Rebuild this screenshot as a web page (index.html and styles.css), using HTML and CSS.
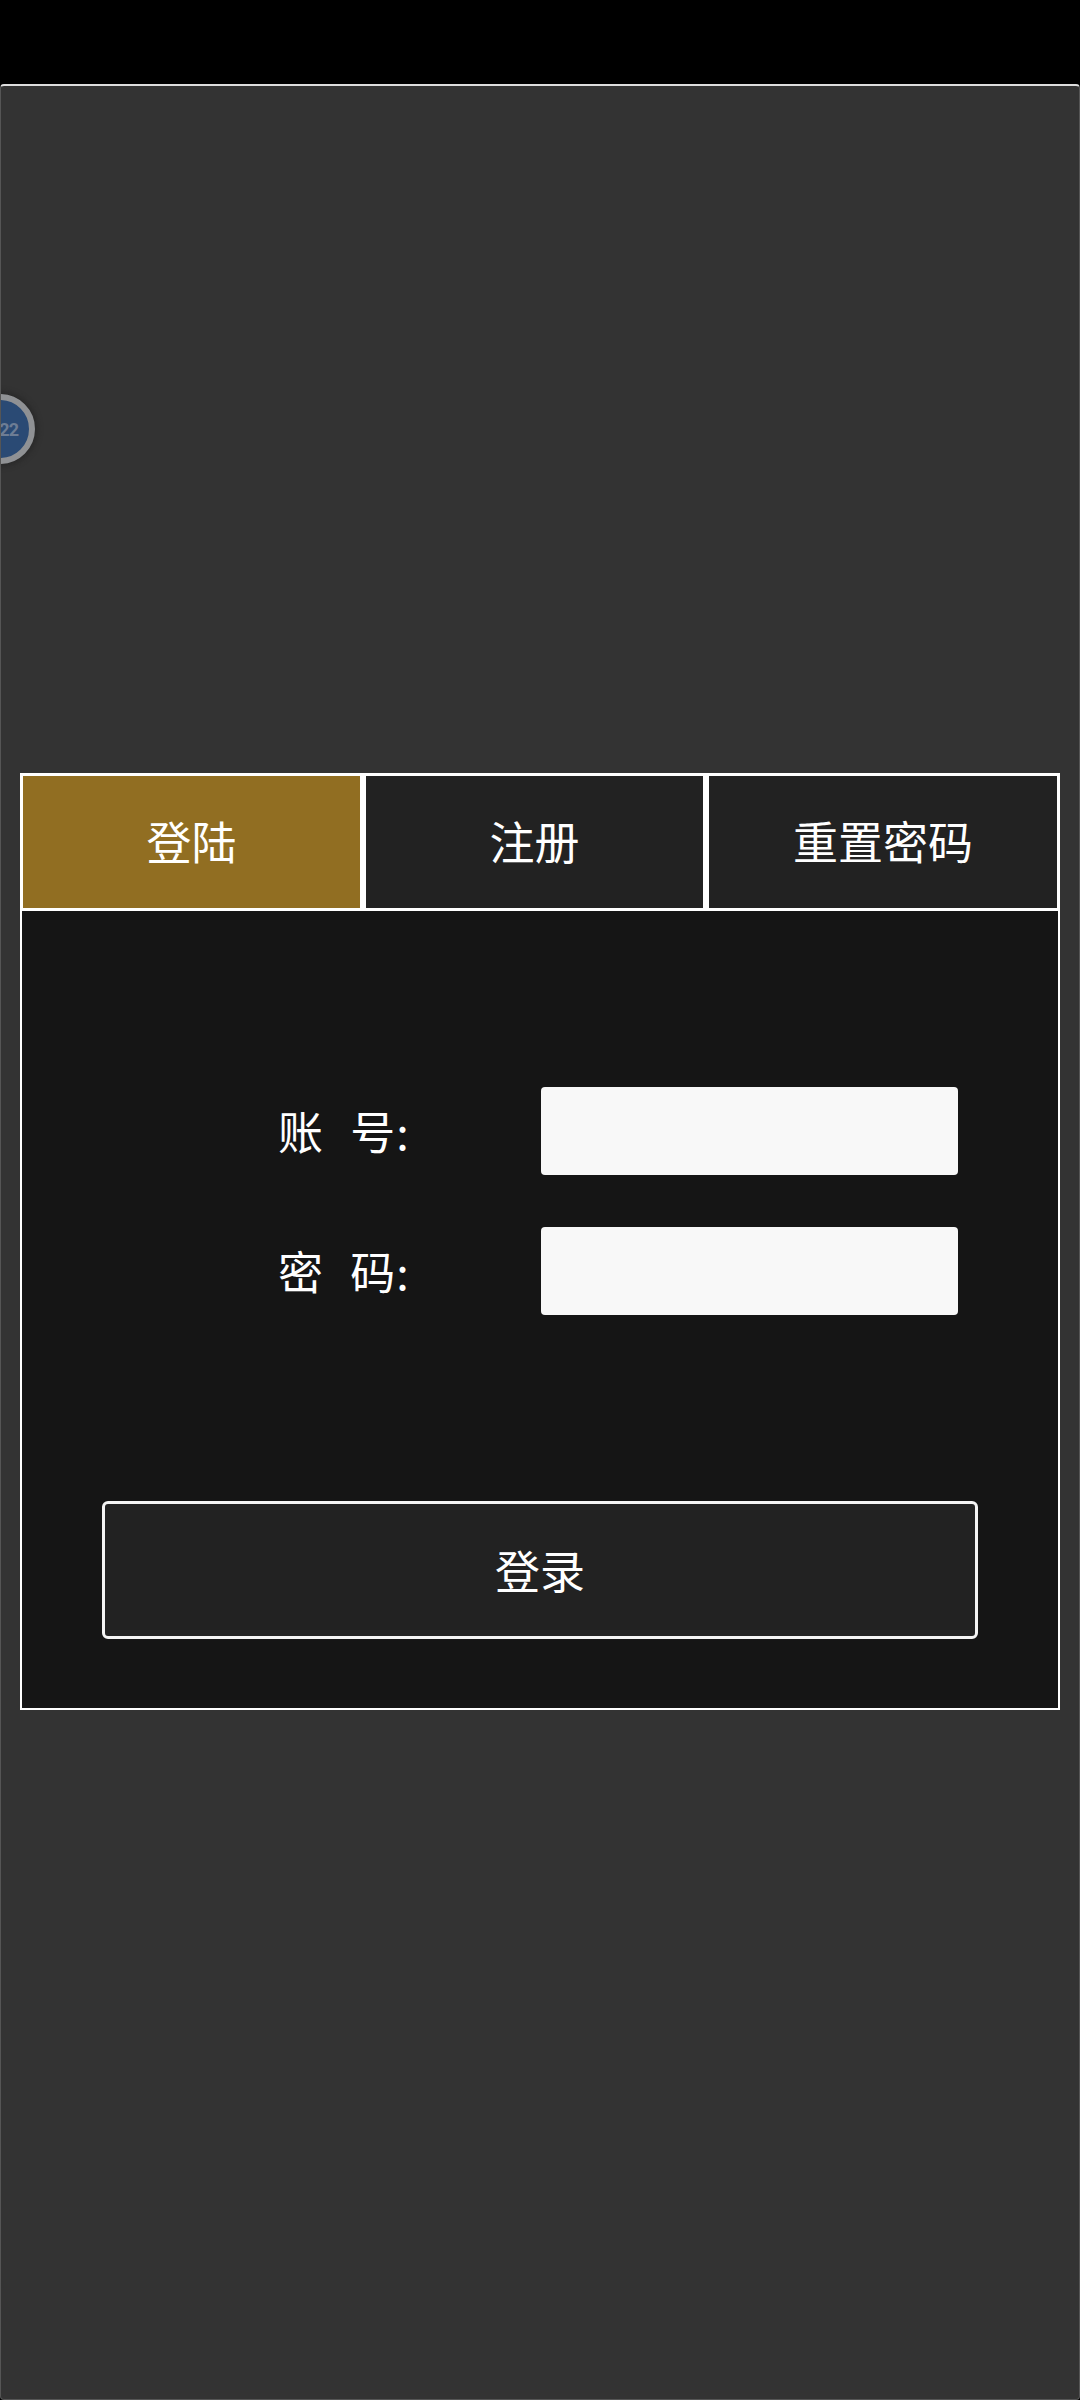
FILE: index.html
```html
<!DOCTYPE html>
<html lang="zh-CN">
<head>
    <meta charset="UTF-8">
    <title>登陆</title>
    <link rel="stylesheet" href="styles.css">
</head>
<body>
    <div class="status-bar"></div>
    <div class="window">
        <div class="float-ball"><span>22</span></div>
        <div class="login-panel">
            <div class="tabs">
                <div class="tab tab-active">登陆</div>
                <div class="tab">注册</div>
                <div class="tab tab-wide">重置密码</div>
            </div>
            <div class="form">
                <div class="fields">
                    <div class="field">
                        <label class="field-label">账&nbsp;&nbsp;号:</label>
                        <div class="field-input"></div>
                    </div>
                    <div class="field">
                        <label class="field-label">密&nbsp;&nbsp;码:</label>
                        <div class="field-input"></div>
                    </div>
                </div>
                <div class="submit">登录</div>
            </div>
        </div>
    </div>
</body>
</html>
```
FILE: styles.css
```css
* {
    box-sizing: border-box;
}

html, body {
    margin: 0;
    height: 2400px;
    width: 1080px;
    overflow: hidden;
}

body {
    background-color: #000;
    font-family: "Noto Sans CJK SC", "Noto Sans", sans-serif;
    color: #fff;
}

.status-bar {
    height: 84px;
}

.window {
    position: relative;
    height: 2316px;
    padding: 687px 18px 0 19px;
    background-color: #333;
    border: 1px solid #555;
    border-top: 2px solid #ddd;
    border-radius: 4px;
    overflow: hidden;
}

.float-ball {
    position: absolute;
    left: -36px;
    top: 308px;
    width: 70px;
    height: 70px;
    display: flex;
    justify-content: flex-end;
    align-items: center;
    padding-right: 11px;
    background-color: #2a4a74;
    border: 6px solid #8f9194;
    border-radius: 50%;
    box-shadow: 0 0 5px 3px #2a2a2a;
    font-family: Roboto, sans-serif;
    font-size: 18px;
    font-weight: 700;
    letter-spacing: -1px;
    color: #6d7d94;
}

.login-panel {
    width: 1040px;
}

.tabs {
    display: flex;
    gap: 6px;
    height: 138px;
    padding: 3px;
    background-color: #fff;
}

.tab {
    flex: 0 0 337px;
    display: flex;
    justify-content: center;
    align-items: center;
    padding-bottom: 4px;
    background-color: #222;
    font-size: 45px;
}

.tab-active {
    background-color: #916e22;
}

.tab-wide {
    flex: 1;
}

.form {
    height: 799px;
    padding-top: 176px;
    background-color: #151515;
    border: 2px solid #fff;
    border-top: 0;
}

.fields {
    display: flex;
    flex-direction: column;
    gap: 52px;
}

.field {
    display: flex;
    align-items: center;
    height: 88px;
}

.field-label {
    width: 519px;
    padding: 0 0 2px 256px;
    font-size: 45px;
    letter-spacing: 1px;
    word-spacing: 2px;
    white-space: nowrap;
}

.field-input {
    width: 417px;
    height: 88px;
    background-color: #f8f8f8;
    border-radius: 4px;
}

.submit {
    display: flex;
    justify-content: center;
    align-items: center;
    width: 876px;
    height: 138px;
    margin: 186px 0 0 80px;
    padding-bottom: 2px;
    background-color: #222;
    border: 3px solid #f4f4f4;
    border-radius: 6px;
    font-size: 45px;
}
```
